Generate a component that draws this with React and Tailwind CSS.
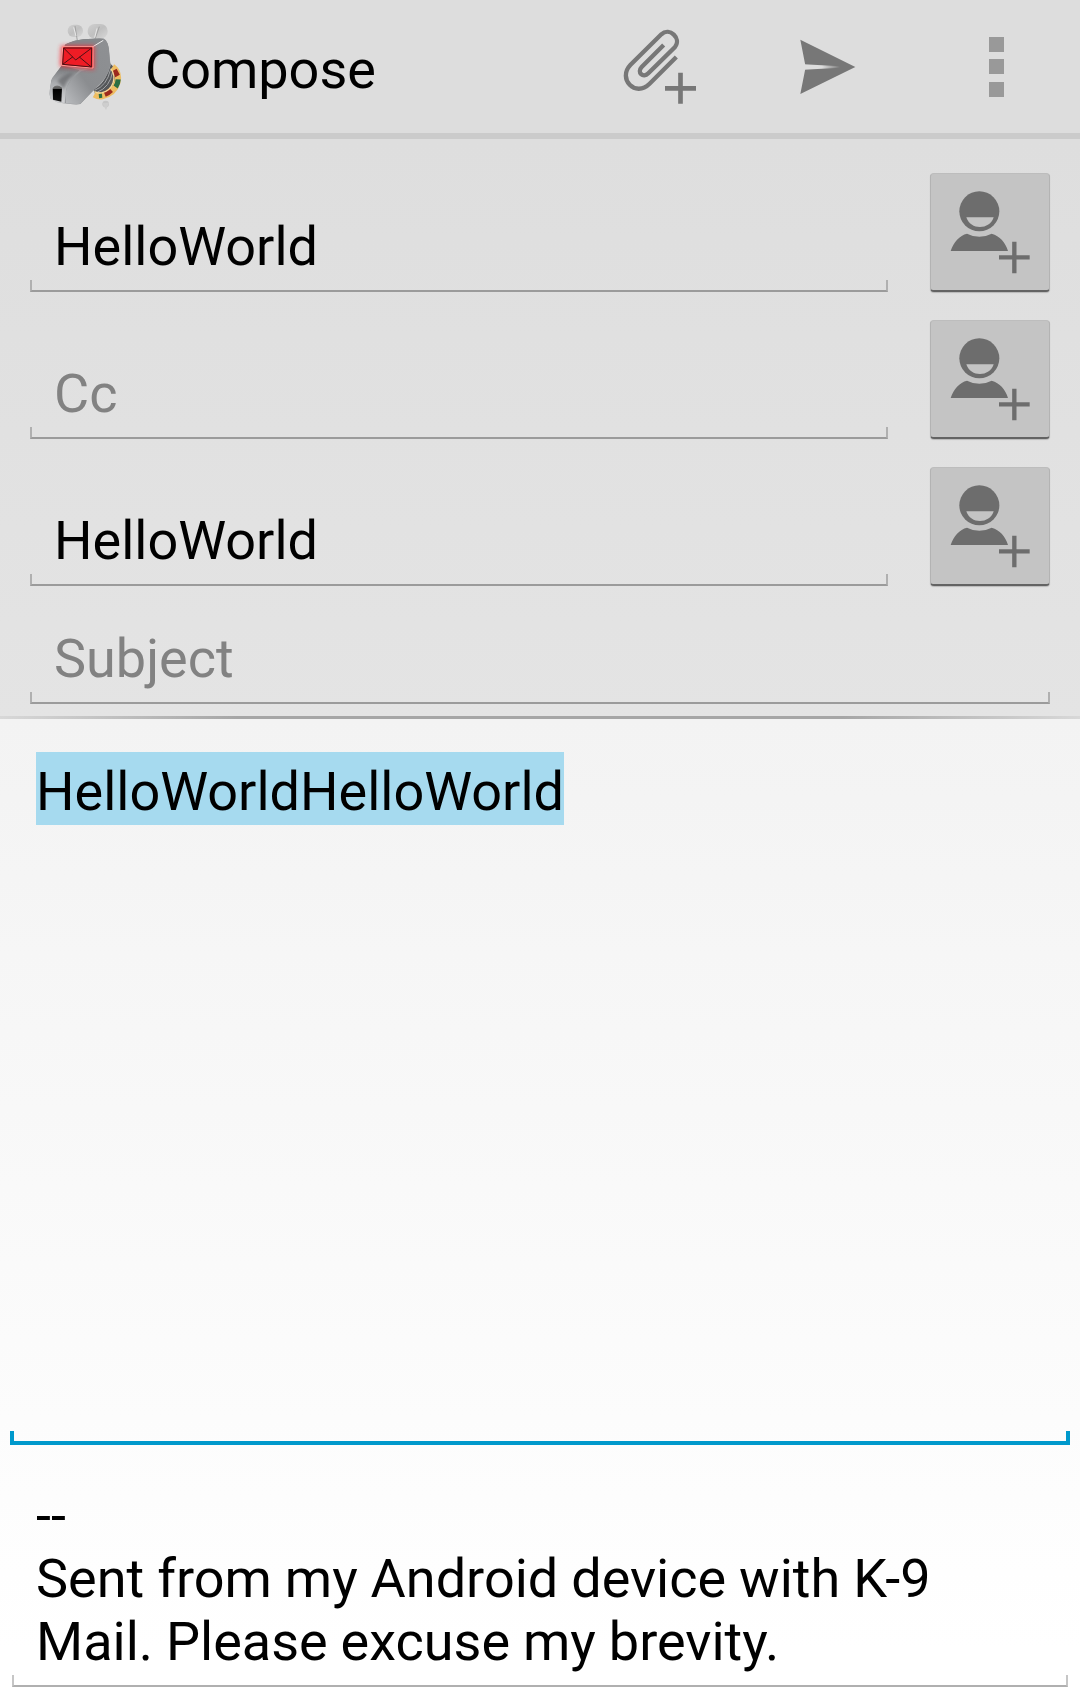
function K9Logo() {
  return (
    <svg className="mt-[10px] h-[110px] w-[110px] shrink-0" viewBox="0 0 330 330">
      <defs>
        <linearGradient id="head" x1="0.1" y1="0" x2="0.7" y2="1">
          <stop offset="0" stopColor="#707275" />
          <stop offset="0.45" stopColor="#8f9194" />
          <stop offset="0.7" stopColor="#a6a8ab" />
          <stop offset="1" stopColor="#77797c" />
        </linearGradient>
        <linearGradient id="side" x1="0" y1="1" x2="1" y2="0">
          <stop offset="0" stopColor="#b9bbbe" />
          <stop offset="0.4" stopColor="#8b8d90" />
          <stop offset="1" stopColor="#8e9093" />
        </linearGradient>
        <linearGradient id="snout" x1="0" y1="0" x2="0" y2="1">
          <stop offset="0" stopColor="#6e7073" />
          <stop offset="0.45" stopColor="#a9abae" />
          <stop offset="1" stopColor="#d2d3d5" />
        </linearGradient>
        <linearGradient id="nose" x1="0" y1="0" x2="0" y2="1">
          <stop offset="0" stopColor="#777" />
          <stop offset="0.2" stopColor="#555" />
          <stop offset="0.24" stopColor="#000" />
          <stop offset="1" stopColor="#111" />
        </linearGradient>
        <linearGradient id="ear" x1="0" y1="0" x2="1" y2="1">
          <stop offset="0" stopColor="#cfcfcf" />
          <stop offset="0.5" stopColor="#c0c0c0" />
          <stop offset="1" stopColor="#d8d8d8" />
        </linearGradient>
        <filter id="glow" x="-30%" y="-30%" width="160%" height="160%">
          <feGaussianBlur stdDeviation="6" />
        </filter>
        <filter id="soft" x="-20%" y="-20%" width="140%" height="140%">
          <feGaussianBlur stdDeviation="5" />
        </filter>
      </defs>
      <ellipse cx="227" cy="282" rx="10" ry="10" fill="#c6c6c6" />
      <path d="M217 280L228 300L237 278Z" fill="#cecece" />
      <path d="M190 238Q228 222 240 160L258 178Q264 232 220 258L196 254Z" fill="#55575a" />
      <path d="M194 241Q230 228 242 178M201 247Q240 232 248 184" fill="none" stroke="#a2a4a6" strokeWidth="3" />
      <g transform="translate(6 0) scale(0.965 1)" fill="none">
        <path d="M250 171C280 190 271 246 218 258Q206 260 194 253" stroke="#eebd62" strokeWidth="20" />
        <path d="M256 180L266 198M246 240Q238 248 226 253" stroke="#9c2a1e" strokeWidth="16" />
        <path d="M268 208Q267 221 260 231" stroke="#2b6e43" strokeWidth="16" />
        <path d="M218 257L208 258" stroke="#2b6e43" strokeWidth="13" />
        <path d="M245 176C264 202 254 238 218 248Q204 251 194 245" stroke="#f5d998" strokeWidth="4" />
      </g>
      <rect x="113" y="44" width="46" height="37" rx="18" fill="url(#ear)" />
      <rect x="173" y="42" width="60" height="44" rx="21" fill="url(#ear)" />
      <path d="M135 48L142 92M208 50L192 96" stroke="#a2a2a2" strokeWidth="3" fill="none" />
      <path d="M131 52L138 78M201 55L194 83" stroke="#e8e8e8" strokeWidth="3" fill="none" />
      <path d="M105 104Q140 84 222 86Q235 92 237 125L242 166Q234 205 195 237L151 282Q137 286 82 277L62 266Q56 252 60 236L64 210L96 166Z" fill="url(#head)" />
      <path d="M188 112L224 91Q237 96 238 130L241 166Q232 206 192 238L151 281Q132 284 108 279L108 245Q111 215 153 184L187 174Z" fill="url(#side)" />
      <path d="M66 205L96 166L148 181Q118 205 108 238L104 279L82 277L62 266Q56 250 60 236Z" fill="url(#snout)" />
      <path d="M82 214Q104 188 132 188Q108 212 101 238L94 226Z" fill="#66686b" opacity="0.7" filter="url(#soft)" />
      <path d="M105 104Q140 84 222 86L188 110L103 112Z" fill="#85878a" />
      <path d="M187 111L220 91" stroke="#eee" strokeWidth="3" />
      <path d="M68 234Q80 220 96 233L94 275L69 269Z" fill="url(#nose)" />
      <path d="M96 110H190V175L93 166Z" fill="#ff2730" stroke="#ff2730" strokeWidth="6" opacity="0.8" filter="url(#glow)" />
      <path d="M98 110H189V174L95 166Z" fill="#ee1c25" stroke="#ff9d96" strokeWidth="3" />
      <path d="M101 114H185L184 171L98 163Z" fill="#ee1c25" stroke="#4c1015" strokeWidth="3" />
      <path d="M101 114L137 150L185 114M98 163L129 140M184 171L148 141" fill="none" stroke="#4c1015" strokeWidth="3" />
    </svg>
  );
}

function AttachIcon() {
  return (
    <svg className="mt-[27px] h-[80px] w-[80px] shrink-0" viewBox="60 51 240 240" fill="none" stroke="#777">
      <path
        d="M191 105L125 171C110 187 129 206 145 190L225 111C245 86 209 50 184 73L91 165C52 206 106 263 148 222L229 141"
        strokeWidth="13"
      />
      <path d="M195 235H288M241.500 188V281" strokeWidth="14" />
    </svg>
  );
}

function SendIcon() {
  return (
    <svg className="mt-[38px] ml-[100px] h-[56px] w-[56px] shrink-0" viewBox="600 84 168 168">
      <defs>
        <linearGradient id="slit" x1="0" x2="1" y1="0" y2="0">
          <stop offset="0" stopColor="#ddd" />
          <stop offset="0.5" stopColor="#ddd" />
          <stop offset="1" stopColor="#777" />
        </linearGradient>
      </defs>
      <path d="M601 89L766 171L601 252L617 171Z" fill="#777" />
      <path d="M612 163L720 169V173L612 179Z" fill="url(#slit)" />
    </svg>
  );
}

function ContactButton() {
  return (
    <button className="-mt-px h-[119px] w-[120px] shrink-0 rounded-[4px] border-x border-t border-b-2 border-x-[#b3b3b3] border-t-[#bdbdbd] border-b-[#636363] bg-[#c4c4c4] shadow-[0_1px_1px_rgba(0,0,0,0.18)]">
      <svg className="-ml-px h-[118px] w-[120px]" viewBox="60 42 360 354">
        <circle cx="208" cy="154" r="60" fill="#6d6d6d" />
        <path d="M169 172H251C240 210 181 212 169 172Z" fill="#c4c4c4" />
        <path d="M122 273C130 247 149 226 171 221Q208 240 245 221C269 227 287 248 294 273Z" fill="#6d6d6d" />
        <path d="M267 292H359M313 245V340" stroke="#6d6d6d" strokeWidth="13" />
      </svg>
    </button>
  );
}

function Underline() {
  return <div className="h-[12px] w-full border-x-2 border-b-2 border-x-[#b0b0b0] border-b-[#9b9b9b]" />;
}

function Recipient({ text, hint }) {
  return (
    <div className="flex h-[118px] justify-between">
      <div className="w-[858px] pt-[41px]">
        <div className={hint ? "h-[65px] pl-[24px] text-[#828282]" : "h-[65px] pl-[24px]"}>{text}</div>
        <Underline />
      </div>
      <ContactButton />
    </div>
  );
}

export default function App() {
  return (
    <div
      className="flex h-[1699px] w-[1080px] flex-col overflow-hidden bg-white text-[54px] leading-[63px] text-black"
      style={{ fontFamily: 'Roboto, sans-serif' }}
    >
      <header className="flex h-[139px] shrink-0 border-b-[6px] border-[#cbcbcb] bg-[#dddddd] pl-[30px]">
        <K9Logo />
        <h1 className="mt-[38px] ml-[5px] w-[475px] shrink-0">Compose</h1>
        <AttachIcon />
        <SendIcon />
        <div className="mt-[37px] ml-[133px] flex w-[15px] flex-col">
          <div className="h-[15px] bg-[#999]" />
          <div className="mt-[7px] h-[15px] bg-[#999]" />
          <div className="mt-[8px] h-[15px] bg-[#999]" />
        </div>
      </header>

      <section className="h-[577px] shrink-0 bg-linear-to-b from-[#dedede] to-[#e4e4e4] px-[30px] pt-[35px]">
        <div className="flex flex-col gap-[29px]">
          <Recipient text="HelloWorld" />
          <Recipient text="Cc" hint />
          <Recipient text="HelloWorld" />
        </div>
        <div className="mt-[41px]">
          <div className="h-[65px] pl-[24px] text-[#828282]">Subject</div>
          <Underline />
        </div>
      </section>
      <div className="h-[3px] shrink-0 bg-[linear-gradient(to_right,#d8d8d8,#a6a6a6_22%,#a6a6a6_78%,#d8d8d8)]" />

      <main className="h-[980px] bg-linear-to-b from-[#f3f3f3] to-white to-95%">
        <div className="mx-[10px] flex h-[726px] flex-col justify-between pt-[33px]">
          <div className="ml-[26px] h-[73px] w-[528px] bg-[#a6daef] pt-[8px]">HelloWorldHelloWorld</div>
          <div className="h-[14px] border-x-4 border-b-4 border-[#0099cc]" />
        </div>
        <div className="mx-[12px] pt-[39px]">
          <div className="h-[191px] pl-[24px] [word-spacing:-0.45px]">
            <p>--</p>
            <p>Sent from my Android device with K-9</p>
            <p>Mail. Please excuse my brevity.</p>
          </div>
          <div className="h-[12px] border-x-2 border-b-2 border-x-[#c6c6c6] border-b-[#b0b0b0]" />
        </div>
      </main>
    </div>
  );
}
